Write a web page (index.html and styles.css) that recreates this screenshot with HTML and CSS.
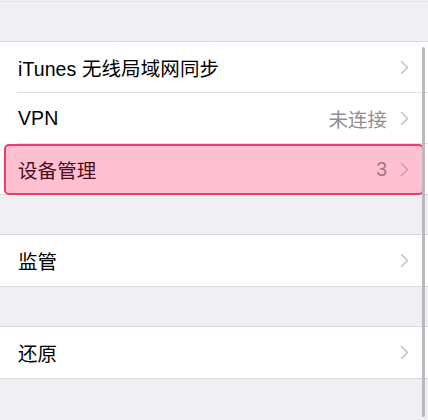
FILE: index.html
```html
<!DOCTYPE html>
<html lang="zh-CN">
<head>
<meta charset="utf-8">
<link rel="stylesheet" href="styles.css">
</head>
<body>
<div class="page">
  <div class="gap gap-top"></div>
  <div class="group">
    <div class="row">
      <span class="label">iTunes 无线局域网同步</span>
      <span class="chev"><svg width="9" height="15" viewBox="0 0 9 15"><path d="M1.5 1.5 L7.5 7.5 L1.5 13.5" fill="none" stroke="#c4c4c8" stroke-width="1.6" stroke-linecap="round" stroke-linejoin="round"/></svg></span>
    </div>
    <div class="row">
      <span class="label">VPN</span>
      <span class="value">未连接</span>
      <span class="chev"><svg width="9" height="15" viewBox="0 0 9 15"><path d="M1.5 1.5 L7.5 7.5 L1.5 13.5" fill="none" stroke="#c4c4c8" stroke-width="1.6" stroke-linecap="round" stroke-linejoin="round"/></svg></span>
    </div>
    <div class="row row-hl">
      <span class="label">设备管理</span>
      <span class="value">3</span>
      <span class="chev"><svg width="9" height="15" viewBox="0 0 9 15"><path d="M1.5 1.5 L7.5 7.5 L1.5 13.5" fill="none" stroke="#c4c4c8" stroke-width="1.6" stroke-linecap="round" stroke-linejoin="round"/></svg></span>
      <div class="highlight"></div>
    </div>
  </div>
  <div class="gap"></div>
  <div class="group">
    <div class="row row-tall">
      <span class="label">监管</span>
      <span class="chev"><svg width="9" height="15" viewBox="0 0 9 15"><path d="M1.5 1.5 L7.5 7.5 L1.5 13.5" fill="none" stroke="#c4c4c8" stroke-width="1.6" stroke-linecap="round" stroke-linejoin="round"/></svg></span>
    </div>
  </div>
  <div class="gap"></div>
  <div class="group">
    <div class="row row-tall">
      <span class="label">还原</span>
      <span class="chev"><svg width="9" height="15" viewBox="0 0 9 15"><path d="M1.5 1.5 L7.5 7.5 L1.5 13.5" fill="none" stroke="#c4c4c8" stroke-width="1.6" stroke-linecap="round" stroke-linejoin="round"/></svg></span>
    </div>
  </div>
  <div class="scrollbar"></div>
</div>
</body>
</html>
```

FILE: styles.css
```css
* { box-sizing: border-box; }
html, body {
  margin: 0;
  padding: 0;
  background: #efeff4;
}
body {
  width: 428px;
  height: 420px;
  overflow: hidden;
  font-family: "Liberation Sans", "Noto Sans CJK SC", sans-serif;
  color: #000;
}
.page {
  position: relative;
  height: 420px;
  border-top: 1px solid #e2e2e6;
  margin-top: 1px;
}
.gap { height: 39px; }
.gap-top { height: 39px; }
.group {
  background: #fff;
  border-top: 1px solid #d9d9dd;
  border-bottom: 1px solid #d9d9dd;
}
.row {
  position: relative;
  display: flex;
  align-items: center;
  height: 50px;
  padding: 0 19px 0 18px;
}
.row-tall { height: 51px; }
.row + .row::before {
  content: "";
  position: absolute;
  left: 17px;
  right: 0;
  top: -1px;
  height: 1px;
  background: #e0e0e4;
}
.row + .row { margin-top: 1px; }
.label {
  flex: 1;
  font-size: 19.5px;
  letter-spacing: 0.1px;
}
.value {
  font-size: 19.5px;
  font-weight: 400;
  color: #8e8e93;
  margin-right: 13px;
}
.chev {
  display: flex;
  align-items: center;
  width: 9px;
  height: 15px;
}
.highlight {
  position: absolute;
  left: 4px;
  right: 4px;
  top: 0;
  bottom: -1px;
  background: rgba(255, 40, 100, 0.29);
  border: 2px solid #f03b6c;
  border-radius: 5px;
}
.scrollbar {
  position: absolute;
  left: 422px;
  top: 45px;
  width: 2.5px;
  height: 370px;
  border-radius: 2px;
  background: #b9b9bd;
}
```
